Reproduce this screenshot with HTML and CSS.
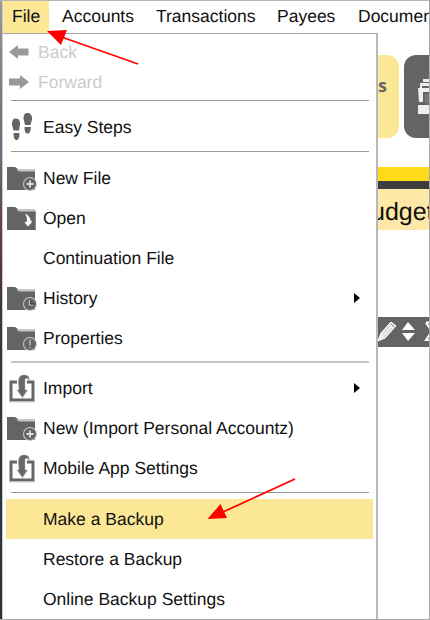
FILE: index.html
```
<!DOCTYPE html>
<html lang="en">
<head>
<meta charset="utf-8">
<title>File menu</title>
<link rel="stylesheet" href="styles.css">
</head>
<body>
<svg class="defs" width="0" height="0">
  <symbol id="folder" viewBox="0 0 30 24"><path d="M0 0H8L11 2V4H0z" fill="#646464"/><path d="M10 2H28V5H10z" fill="#c4c4c4"/><path d="M0 3H10L12 4.500H28V23H0z" fill="#646464"/></symbol>
  <symbol id="badge" viewBox="0 0 30 24"><circle cx="23" cy="17" r="7" fill="#c8c8c8"/><circle cx="23" cy="17" r="6" fill="#646464"/></symbol>
  <symbol id="new" viewBox="0 0 30 24"><use href="#folder"/><use href="#badge"/><path d="M23 13.500v7M19.500 17h7" stroke="#ddd" stroke-width="1.800"/></symbol>
  <symbol id="import" viewBox="0 0 30 30"><path d="M10 9H4V27H26V9H20" fill="none" stroke="#666" stroke-width="3"/><path d="M2.500 29H27.500" stroke="#ccc"/><path d="M11.500 10Q11 1.500 17 2Q22 1.500 22.500 7Q20 4 18 6V17H20.500L15.500 24.500L10 17H12z" fill="#686868" stroke="#aaa" stroke-width=".5"/></symbol>
</svg>
<div class="window">
  <nav class="menubar"><span class="tab open">File</span><span class="tab accounts">Accounts</span><span class="tab transactions">Transactions</span><span class="tab payees">Payees</span><span class="tab documents">Documents</span></nav>
  <div class="content">
    <div class="menu">
      <div class="item small"><svg class="nav" viewBox="0 0 20 14"><path d="M0 7L9 0V3.500H19.500V10.500H9V14z"/></svg><span>Back</span></div>
      <div class="item small"><svg class="nav" viewBox="0 0 20 14"><path d="M20 7L11 0V3.500H0V10.500H11V14z"/></svg><span>Forward</span></div>
      <hr class="short">
      <div class="item"><svg class="icon" width="30" height="30" viewBox="0 -1.500 30 30"><g fill="#646464"><path d="M5 11C5 6 7 4.500 9 5C12 5 13.500 8 13 11L12 17H6.500z"/><path d="M6.500 19.500H12.500C12.500 25 11 26.500 9.500 26.500C7.500 26.500 6.500 24 6.500 19.500z"/><path d="M16.500 5C16.500 0 19 -1 21 -.5C24 0 25.500 3 25 6L23.500 11.500H18z"/><path d="M17.500 13.500H24C23.500 19 22 20.500 20.500 20C18.500 20 17.500 18 17.500 13.500z"/></g></svg><span>Easy Steps</span></div>
      <hr>
      <div class="item"><svg class="icon folder" width="30" height="24"><use href="#new"/></svg><span>New File</span></div>
      <div class="item"><svg class="icon folder" width="30" height="24" viewBox="0 0 30 24"><use href="#folder"/><path d="M28 4h1v19h-1z" fill="#888"/><path d="M18 6.500Q23 9 23.500 13L25 15L21 19.500L17.500 15.500L20 14.500Q20.500 10 18 6.500z" fill="#fff"/></svg><span>Open</span></div>
      <div class="item"><span class="icon"></span><span>Continuation File</span></div>
      <div class="item"><svg class="icon folder" width="30" height="24" viewBox="0 0 30 24"><use href="#folder"/><use href="#badge"/><path d="M22.500 13v5h4.500" fill="none" stroke="#ccc" stroke-width="1.200"/><path d="M23.500 13.500v3.500h4" fill="none" stroke="#333"/></svg><span>History</span><i class="chevron"></i></div>
      <div class="item"><svg class="icon folder" width="30" height="24" viewBox="0 0 30 24"><use href="#folder"/><use href="#badge"/><path d="M23 12.500v6M23 20v1" stroke="#ccc" stroke-width="1.200"/></svg><span>Properties</span></div>
      <hr class="short light">
      <div class="item"><svg class="icon" width="30" height="30"><use href="#import"/></svg><span>Import</span><i class="chevron"></i></div>
      <div class="item"><svg class="icon folder" width="30" height="24"><use href="#new"/></svg><span>New (Import Personal Accountz)</span></div>
      <div class="item"><svg class="icon" width="30" height="30"><use href="#import"/></svg><span>Mobile App Settings</span></div>
      <hr>
      <div class="item selected"><span class="icon"></span><span>Make a Backup</span></div>
      <div class="item"><span class="icon"></span><span>Restore a Backup</span></div>
      <div class="item"><span class="icon"></span><span>Online Backup Settings</span></div>
    </div>
    <main class="app">
      <div class="cards"><div class="card yellow">s</div><div class="card dark"><svg width="17" height="38" viewBox="0 0 17 38"><g fill="#eee"><path d="M5 0H17V3H5zM2 4H17V7H4V9H2zM0 9H17V13H5V23H1zM0 26H17V35H0z"/><path d="M7 15H17V24H7z" fill="#777"/></g></svg></div></div>
      <div class="bar"></div>
      <div class="title"><span>udget</span></div>
      <div class="tools"><svg width="51" height="30" viewBox="0 0 51 30"><path d="M0 24L3 16L13 5L18 9L7 21z" fill="#eee" stroke="#fff"/><path d="M12.500 6.500L16.500 10" stroke="#777" stroke-width="1"/><path d="M4 18L12 9M6 20L14 11" stroke="#bbb" stroke-width=".7"/><path d="M24 13L30 5L37 13zM24 16H37L30 24z" fill="#fff"/><path d="M48 5.500H51M48 6L54 14L48 23H51" fill="none" stroke="#fff" stroke-width="2"/></svg></div>
    </main>
  </div>
</div>
<svg class="arrows" width="430" height="620" viewBox="0 0 430 620"><g stroke="#f00" stroke-width="1.800"><path d="M63 37.500L138 64M223 512L295 479"/></g><path d="M47 31L67 30L61 45zM207.500 519L220.500 504L227 518z" fill="#f00"/></svg>
</body>
</html>
```
FILE: styles.css
```
* { box-sizing: border-box; }
body { margin: 0; width: 430px; height: 620px; overflow: hidden; background: #fff; font: 17.5px/20px "Liberation Sans", Arial, sans-serif; text-rendering: geometricPrecision; color: #111; }
.defs, .arrows { position: absolute; left: 0; top: 0; pointer-events: none; }
.window { height: 620px; padding-left: 2px; border-right: 1px solid #aaa; border-bottom: 1px solid #aaa; border-top: 1px solid #b5b5b5; background: linear-gradient(#999, #777b84 15%, #667080 25%, #634850 34%, #4b3438 46%, #34383d 55%, #28343a) left / 2px 100% no-repeat; overflow: hidden; }
.menubar { display: flex; height: 32px; border-left: 1px solid #ccc; white-space: nowrap; overflow: hidden; }
.tab { flex: none; padding-top: 5px; }
.open { width: 46px; padding-left: 9px; background: #fbe795; }
.accounts { width: 95px; padding-left: 13px; }
.transactions { width: 121px; padding-left: 12px; }
.payees { width: 81px; padding-left: 12px; }
.documents { padding-left: 12px; }
.content { display: flex; height: 586px; }
.menu { flex: none; width: 376px; padding-top: 3px; border-top: 1px solid #aaa; border-right: 2px solid #b8b8b8; border-left: 1px solid #ccc; }
.item { display: flex; align-items: center; height: 40px; padding-left: 4px; margin-right: 3px; white-space: nowrap; }
.item .icon { flex: none; width: 30px; margin-right: 6px; }
.item .folder { margin-top: 1px; }
.item span { padding-bottom: 1px; }
.small { height: 30px; padding-left: 6px; color: #ccc; }
.nav { width: 20px; height: 14px; margin-right: 9px; fill: #999; }
.menu hr { height: 1px; margin: 4px 7px 6px 8px; border: 0; background: #999; }
.menu hr.short { margin: 3px 7px 6px 8px; }
.menu hr.light { height: 2px; margin: 3px 7px 5px 8px; background: #c4c4c4; }
.chevron { margin-left: auto; margin-right: 13px; border-left: 6px solid #000; border-top: 5.5px solid transparent; border-bottom: 5.5px solid transparent; }
.selected { background: #fbe795; margin-left: 3px; padding-left: 1px; }
.app { flex: 1; min-width: 0; overflow: hidden; }
.cards { display: flex; gap: 5px; height: 83px; margin-top: 22px; }
.card { height: 83px; }
.yellow { width: 21px; padding: 21px 0 0 0; border-radius: 0 12px 12px 0; background: #fbe795; color: #666; font: bold 18px/20px "Open Sans", sans-serif; }
.dark { width: 25px; padding: 24px 0 0 14px; border-radius: 12px 0 0 12px; background: #646464; overflow: hidden; }
.dark svg { display: block; flex: none; }
.bar { height: 22px; margin-top: 29px; background: linear-gradient(#fddb18 14px, #3d3d3d 14px); }
.title { height: 41px; padding-top: 10px; background: #fde8a8; font-size: 25px; line-height: 26px; overflow: hidden; }
.title span { display: block; margin-left: -7px; }
.tools { height: 30px; margin-top: 87px; background: #646464; }
.tools svg { display: block; }
```
